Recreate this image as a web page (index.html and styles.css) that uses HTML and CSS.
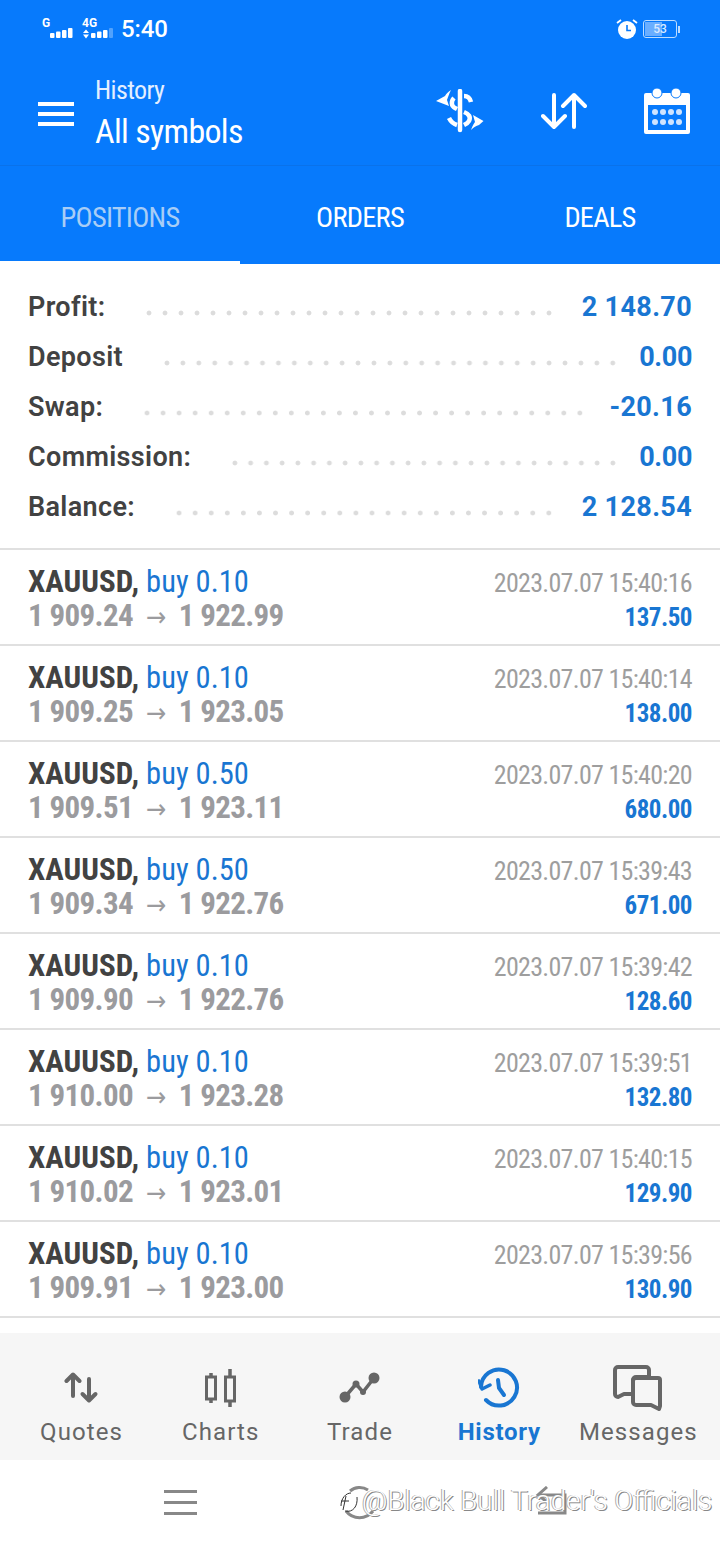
FILE: index.html
```html
<html>
    <head>
        <meta charset="UTF-8">
        <link rel="stylesheet" href="styles.css">
    </head>
    <body>
        <div id="app">
            <div class="top">
                <div class="status">
                    <div class="status-left">
                        <svg class="signal" width="72" height="24" viewBox="0 0 72 24" fill="#fff">
                            <text x="0" y="10" class="net">G</text>
                            <rect x="8" y="16" width="4.500" height="5" rx="1"/><rect x="14" y="14.500" width="4.500" height="6.500" rx="1"/><rect x="20" y="13" width="4.500" height="8" rx="1"/><rect x="26" y="11" width="4.500" height="10" rx="1"/>
                            <text x="40" y="10" class="net">4G</text>
                            <path d="M41 16l3-3.500 3 3.500zM41 17.500h6l-3 4z"/>
                            <rect x="49" y="16" width="4.500" height="5" rx="1"/><rect x="55" y="14.500" width="4.500" height="6.500" rx="1"/><rect x="61" y="13" width="4.500" height="8" rx="1"/><rect x="67" y="11" width="4" height="10" rx="1" opacity=".3"/>
                        </svg>
                        <span class="clock">5:40</span>
                    </div>
                    <div class="status-right">
                        <svg width="22" height="22" viewBox="0 0 22 22">
                            <circle cx="11" cy="12" r="9" fill="#fff"/>
                            <path d="M11 7v5.500h4" fill="none" stroke="#077afc" stroke-width="1.600"/>
                            <path d="M1 5l4-3M21 5l-4-3" stroke="#fff" stroke-width="1.800"/>
                        </svg>
                        <div class="battery"><div class="battery-fill"></div><span>53</span></div>
                        <div class="battery-tip"></div>
                    </div>
                </div>
                <div class="toolbar">
                    <div class="burger"><i></i><i></i><i></i></div>
                    <div class="title">
                        <div class="title-small">History</div>
                        <div class="title-big">All symbols</div>
                    </div>
                    <div class="tools">
                        <svg width="50" height="44" viewBox="0 0 50 44" fill="none" stroke="#fff">
                            <path d="M24 2v39" stroke-width="4.500" stroke-linecap="round"/>
                            <path d="M28 7c3 0 6 2 7 6M18 9c-3 3-3 8 1 10l2 1M28 23c5 2 7 5 5 9-1 2-3 3-5 4M13 29c2 4 5 6 8 7" stroke-width="4.500"/>
                            <path d="M0 12L9 7C10 5 12 3 15 1 13 5 12 8 11 11l2 6z" fill="#fff" stroke="none"/>
                            <path d="M47.500 32L37 26l2 7c-2 3-3 5-4 8 3-3 5-4 8-5z" fill="#fff" stroke="none"/>
                        </svg>
                        <svg width="46" height="38" viewBox="0 0 46 38" fill="none" stroke="#fff" stroke-width="4" stroke-linecap="round" stroke-linejoin="round">
                            <path d="M13 3v32M2 24l11 11 11-11"/>
                            <path d="M33 35V3M22 14L33 3l11 11"/>
                        </svg>
                        <svg width="46" height="46" viewBox="0 0 46 46">
                            <path d="M2 5h42a2 2 0 0 1 2 2v37a2 2 0 0 1-2 2H2a2 2 0 0 1-2-2V7a2 2 0 0 1 2-2z" fill="#fff"/>
                            <path d="M4 17h38v25H4z" fill="#077afc"/>
                            <circle cx="13" cy="5" r="5" fill="#fff" stroke="#077afc" stroke-width="1"/>
                            <circle cx="32" cy="5" r="5" fill="#fff" stroke="#077afc" stroke-width="1"/>
                            <g fill="#cfe4ff">
                                <circle cx="11" cy="24" r="3"/><circle cx="19" cy="24" r="3"/><circle cx="27" cy="24" r="3"/><circle cx="35" cy="24" r="3"/>
                                <circle cx="11" cy="34" r="3"/><circle cx="19" cy="34" r="3"/><circle cx="27" cy="34" r="3"/><circle cx="35" cy="34" r="3"/>
                            </g>
                        </svg>
                    </div>
                </div>
                <div class="tabs">
                    <div class="tab tab-on"><span>POSITIONS</span></div>
                    <div class="tab"><span>ORDERS</span></div>
                    <div class="tab"><span>DEALS</span></div>
                </div>
            </div>

            <div class="summary">
                <div class="sum-row"><b>Profit:</b><div class="dots dots-a"></div><span>2 148.70</span></div>
                <div class="sum-row"><b>Deposit</b><div class="dots dots-b"></div><span class="sum-zero">0.00</span></div>
                <div class="sum-row"><b>Swap:</b><div class="dots dots-c"></div><span>-20.16</span></div>
                <div class="sum-row"><b>Commission:</b><div class="dots dots-b"></div><span class="sum-zero">0.00</span></div>
                <div class="sum-row"><b>Balance:</b><div class="dots dots-a"></div><span>2 128.54</span></div>
            </div>

            <div class="deals" id="deals"></div>

            <div class="bottom">
                <div class="nav-item">
                    <svg width="36" height="36" viewBox="0 0 36 36" fill="none" stroke="#666" stroke-width="4" stroke-linecap="round" stroke-linejoin="round">
                        <path d="M9 26V5M2.500 11L9 4.500 15.500 11"/>
                        <path d="M25 9v21M18.500 24l6.500 6.500 6.500-6.500"/>
                    </svg>
                    <span>Quotes</span>
                </div>
                <div class="nav-item">
                    <svg width="36" height="40" viewBox="0 0 36 40" fill="none" stroke="#666" stroke-linecap="butt">
                        <path d="M8 5v30M27 1v38" stroke-width="3.500"/>
                        <rect x="3.500" y="9" width="9" height="22" fill="#f6f6f6" stroke-width="3"/>
                        <rect x="22.500" y="9" width="9" height="24" fill="#f6f6f6" stroke-width="3"/>
                    </svg>
                    <span>Charts</span>
                </div>
                <div class="nav-item">
                    <svg width="44" height="36" viewBox="0 0 44 36" fill="#666">
                        <path d="M7 27L18 14l7 8L36 8" fill="none" stroke="#666" stroke-width="3.500"/>
                        <circle cx="7" cy="27" r="5.500"/><circle cx="18" cy="14" r="3.500"/><circle cx="25" cy="22" r="3"/><circle cx="36" cy="8" r="5.500"/>
                    </svg>
                    <span>Trade</span>
                </div>
                <div class="nav-item nav-on">
                    <svg width="42" height="42" viewBox="0 0 42 42" fill="none" stroke="#1976d2" stroke-width="4" stroke-linecap="round">
                        <path d="M3 20a18 18 0 1 1 5 13"/>
                        <path d="M1 14l3 8 8-4" stroke-linejoin="round" stroke-width="3.500"/>
                        <path d="M20 13l1 8 5 7"/>
                    </svg>
                    <span>History</span>
                </div>
                <div class="nav-item">
                    <svg width="50" height="46" viewBox="0 0 50 46" fill="none" stroke="#666" stroke-width="4" stroke-linejoin="round">
                        <path d="M5 2h28a3 3 0 0 1 3 3v7H23a3 3 0 0 0-3 3v14l-9 0-6 3a3 3 0 0 1-3-3V5a3 3 0 0 1 3-3z"/>
                        <path d="M23 13h22a2 2 0 0 1 2 2v26l-1 3-8-4H23a3 3 0 0 1-3-3V16a3 3 0 0 1 3-3z"/>
                    </svg>
                    <span>Messages</span>
                </div>
            </div>

            <div class="sysbar">
                <div class="sys-burger"><i></i><i></i><i></i></div>
                <svg class="sys-home" width="36" height="36" viewBox="0 0 36 36" fill="none" stroke="#888" stroke-width="3">
                    <path d="M8 7a15 15 0 0 1 18-1M4 27a17 17 0 0 0 27 0"/>
                </svg>
                <svg class="sys-back" width="34" height="30" viewBox="0 0 34 30" fill="none" stroke="#888" stroke-width="3">
                    <path d="M3 9h27v18H3"/>
                    <path d="M12 1L3 9l9 7" />
                </svg>
                <div class="mark">
                    <svg width="24" height="30" viewBox="0 0 24 30" fill="none" stroke="#333" stroke-width="1">
                        <path d="M3 20C3 12 8 7 13 7M7 25c8 2 13-5 12-14M3 15h8M8 10L5 24"/>
                    </svg>
                    <span>@Black Bull Trader's Officials</span>
                </div>
            </div>
        </div>
        <script>
            const filas = [
                ['0.10', '1 909.24', '1 922.99', '15:40:16', '137.50'],
                ['0.10', '1 909.25', '1 923.05', '15:40:14', '138.00'],
                ['0.50', '1 909.51', '1 923.11', '15:40:20', '680.00'],
                ['0.50', '1 909.34', '1 922.76', '15:39:43', '671.00'],
                ['0.10', '1 909.90', '1 922.76', '15:39:42', '128.60'],
                ['0.10', '1 910.00', '1 923.28', '15:39:51', '132.80'],
                ['0.10', '1 910.02', '1 923.01', '15:40:15', '129.90'],
                ['0.10', '1 909.91', '1 923.00', '15:39:56', '130.90']
            ];
            const deals = document.getElementById('deals');
            filas.forEach(f => {
                const fila = document.createElement('div');
                fila.className = 'deal';
                fila.innerHTML = `
                    <div class="deal-left">
                        <div class="deal-name"><b>XAUUSD,</b> <span>buy ${f[0]}</span></div>
                        <div class="deal-price">${f[1]}<em>→</em>${f[2]}</div>
                    </div>
                    <div class="deal-right">
                        <div class="deal-time">2023.07.07 ${f[3]}</div>
                        <div class="deal-profit">${f[4]}</div>
                    </div>`;
                deals.appendChild(fila);
            });
        </script>
    </body>
</html>
```

FILE: styles.css
```css
* {
    box-sizing: border-box;
}
html, body {
    margin: 0;
    padding: 0;
    background: #fff;
}
#app {
    width: 720px;
    height: 1544px;
    overflow: hidden;
    font-family: "Roboto", "Liberation Sans", sans-serif;
    display: flex;
    flex-direction: column;
}

/* cabecera azul */
.top {
    background: #077afc;
    color: #fff;
    height: 264px;
}
.status {
    height: 62px;
    padding: 14px 40px 0 42px;
    display: flex;
    justify-content: space-between;
}
.status-left, .status-right {
    display: flex;
    align-items: center;
    height: 30px;
}
.net {
    font-size: 12px;
    font-weight: 700;
}
.clock {
    font-size: 24px;
    font-weight: 500;
    margin-left: 7px;
    letter-spacing: -.1px;
}
.status-right svg {
    margin-right: 5px;
}
.battery {
    position: relative;
    width: 34px;
    height: 18px;
    border: 1.500px solid #bcdcff;
    border-radius: 3px;
    display: flex;
    align-items: center;
    justify-content: center;
    font-size: 12px;
    font-weight: 500;
}
.battery span {
    position: relative;
    color: #dbeaff;
}
.battery-fill {
    position: absolute;
    left: 1px;
    top: 1px;
    bottom: 1px;
    width: 52%;
    background: #6aaeff;
}
.battery-tip {
    width: 2px;
    height: 7px;
    margin-left: 1px;
    background: #bcdcff;
}
.toolbar {
    height: 104px;
    padding: 0 30px 0 38px;
    display: flex;
    align-items: center;
    border-bottom: 1px solid #0a72ea;
}
.burger i {
    display: block;
    width: 36px;
    height: 4px;
    margin-bottom: 6px;
    background: #fff;
}
.burger i:last-child {
    margin-bottom: 0;
}
.title {
    margin-left: 21px;
    flex: 1;
}
.title-small, .title-big, .tab span, .deal {
    font-stretch: 75%;
}
.title-small {
    font-size: 26px;
    line-height: 32px;
    letter-spacing: -.6px;
    color: #e3efff;
}
.title-big {
    font-size: 34px;
    line-height: 44px;
    margin-top: 3px;
    letter-spacing: -.7px;
}
.tools {
    display: flex;
    align-items: center;
    margin-bottom: 5px;
}
.tools svg:nth-child(1) {
    margin-right: 55px;
}
.tools svg:nth-child(2) {
    margin-right: 57px;
}
.tabs {
    height: 98px;
    display: flex;
}
.tab {
    flex: 1;
    display: flex;
    align-items: center;
    justify-content: center;
    padding-top: 4px;
    font-size: 28.500px;
    letter-spacing: -.8px;
}
.tab-on {
    color: #a8cdf6;
    padding-top: 7px;
    border-bottom: 3px solid #fff;
}

/* resumen */
.summary {
    height: 286px;
    padding: 18px 28px 0 28px;
    border-bottom: 2px solid #e0e0e0;
}
.sum-row {
    height: 50px;
    display: flex;
    align-items: center;
    font-size: 27px;
    font-weight: 600;
}
.sum-row b {
    font-weight: 600;
    letter-spacing: .35px;
    color: #424242;
}
.sum-row span {
    font-weight: 700;
    letter-spacing: .35px;
    color: #1976d2;
}
.sum-row .sum-zero {
    letter-spacing: -.4px;
}
.dots {
    flex: 1;
    height: 6px;
    margin: 11px 0 0 36px;
    background-image: radial-gradient(circle, #dcdcdc 2px, transparent 2.800px);
    background-size: 16px 6px;
    background-repeat: round no-repeat;
}
.dots-a {
    margin-right: 25px;
}
.dots-b {
    margin-right: 18px;
}
.dots-c {
    margin-right: 21px;
}

/* lista de operaciones */
.deals {
    height: 768px;
}
.deal {
    height: 96px;
    padding: 0 28px;
    display: flex;
    justify-content: space-between;
    border-bottom: 2px solid #e0e0e0;
}
.deal-left {
    padding-top: 14px;
}
.deal-name {
    font-size: 31px;
    line-height: 36px;
}
.deal-name b {
    color: #424242;
    font-weight: 700;
}
.deal-name span {
    color: #1976d2;
    font-size: 30.500px;
}
.deal-price {
    font-size: 31px;
    line-height: 32px;
    font-weight: 700;
    letter-spacing: -.65px;
    color: #9b9b9e;
}
.deal-price em {
    font-style: normal;
    font-family: "DejaVu Sans", sans-serif;
    font-weight: 400;
    font-size: 27px;
    line-height: 20px;
    margin: 0 13px 0 13px;
}
.deal-right {
    padding-top: 17px;
    text-align: right;
}
.deal-time {
    font-size: 26px;
    line-height: 32px;
    letter-spacing: -.7px;
    color: #9e9e9e;
}
.deal-profit {
    font-size: 25px;
    line-height: 36px;
    margin-top: 1px;
    font-weight: 700;
    letter-spacing: -.5px;
    color: #1976d2;
}

/* navegacion */
.bottom {
    margin-top: 15px;
    height: 127px;
    background: #f6f6f6;
    display: flex;
    padding: 0 12px;
}
.nav-item {
    flex: 1;
    height: 127px;
    position: relative;
    display: flex;
    flex-direction: column;
    align-items: center;
    color: #666;
}
.nav-item svg {
    height: 50px;
    margin-top: 30px;
}
.nav-item span {
    position: absolute;
    top: 85px;
    font-size: 24px;
    letter-spacing: 1.100px;
    white-space: nowrap;
}
.nav-on {
    color: #1976d2;
}
.nav-on span {
    font-weight: 700;
    letter-spacing: .7px;
}
.sysbar {
    flex: 1;
    position: relative;
    background: #fff;
}
.sys-burger {
    position: absolute;
    left: 164px;
    top: 30px;
}
.sys-burger i {
    display: block;
    width: 33px;
    height: 3px;
    margin-bottom: 8px;
    background: #888;
}
.sys-home {
    position: absolute;
    left: 342px;
    top: 24px;
}
.sys-back {
    position: absolute;
    left: 535px;
    top: 26px;
}
.mark {
    position: absolute;
    left: 338px;
    top: 24px;
    display: flex;
    align-items: center;
}
.mark span {
    font-size: 27.800px;
    font-weight: 300;
    color: #fff;
    white-space: nowrap;
    text-shadow: 1px 1px 0 #888, -1px 0 0 #aaa;
}
```
